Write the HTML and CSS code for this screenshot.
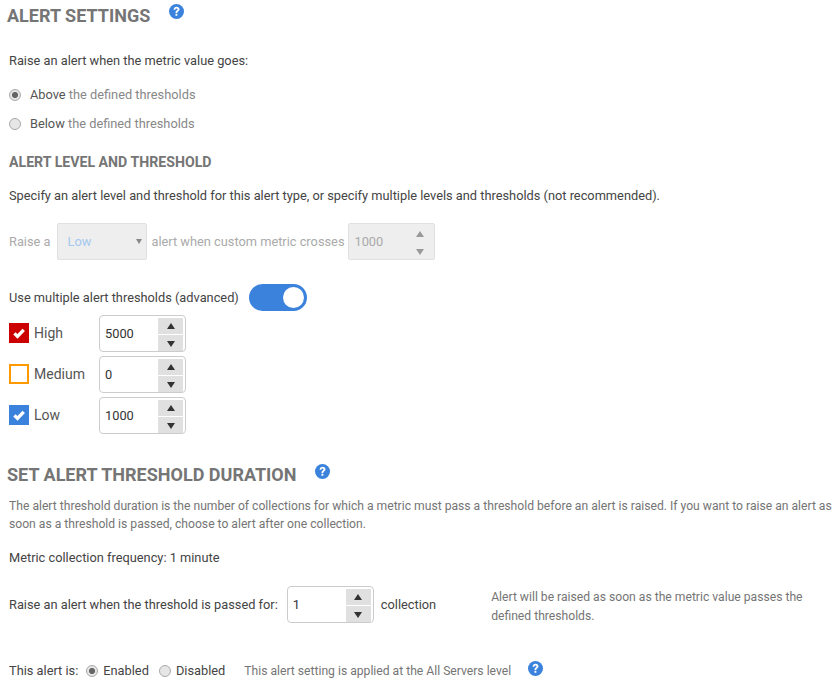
FILE: index.html
```html
<!DOCTYPE html>
<html lang="en">
<head>
    <meta charset="UTF-8">
    <title>Alert Settings</title>
    <link rel="stylesheet" href="styles.css">
</head>
<body>
    <div class="page">
        <div class="title-row title-first">
            <h2>ALERT SETTINGS</h2>
            <svg class="help help-first" viewBox="0 0 16 16"><circle cx="8" cy="8" r="8"/><path d="M4.9 6.1C5 4.2 6.3 3 8.1 3c1.8 0 3.1 1.1 3.1 2.7 0 1.2-.7 1.9-1.5 2.4-.6.4-.8.7-.8 1.5H7c0-1.3.3-2 1.1-2.6.7-.4 1-.7 1-1.2 0-.6-.4-1-1.1-1-.7 0-1.1.5-1.2 1.3zM6.9 10.4h2v2.2h-2z"/></svg>
        </div>

        <p class="line intro">Raise an alert when the metric value goes:</p>
        <label class="radio-row first-radio"><span class="radio checked"></span><span>Above <span class="muted">the defined thresholds</span></span></label>
        <label class="radio-row second-radio"><span class="radio"></span><span>Below <span class="muted">the defined thresholds</span></span></label>

        <h3>ALERT LEVEL AND THRESHOLD</h3>
        <p class="line specify">Specify an alert level and threshold for this alert type, or specify multiple levels and thresholds (not recommended).</p>

        <div class="disabled-row">
            <span>Raise a</span>
            <div class="select">Low<span class="caret"></span></div>
            <span>alert when custom metric crosses</span>
            <div class="spinner off">
                <span class="value">1000</span>
                <div class="arrows"><span class="arrow up"></span><span class="arrow down"></span></div>
            </div>
        </div>

        <div class="toggle-row">
            <span>Use multiple alert thresholds (advanced)</span>
            <span class="toggle"><span class="knob"></span></span>
        </div>

        <div class="levels">
            <div class="level">
                <span class="check high"><svg viewBox="0 0 20 20"><path d="M5.4 10.4l3.1 3 6.2-6.6"/></svg></span>
                <span class="level-name">High</span>
                <div class="spinner">
                    <span class="value">5000</span>
                    <div class="arrows"><span class="arrow up"></span><span class="arrow down"></span></div>
                </div>
            </div>
            <div class="level">
                <span class="check medium"></span>
                <span class="level-name">Medium</span>
                <div class="spinner">
                    <span class="value">0</span>
                    <div class="arrows"><span class="arrow up"></span><span class="arrow down"></span></div>
                </div>
            </div>
            <div class="level">
                <span class="check low"><svg viewBox="0 0 20 20"><path d="M5.4 10.4l3.1 3 6.2-6.6"/></svg></span>
                <span class="level-name">Low</span>
                <div class="spinner">
                    <span class="value">1000</span>
                    <div class="arrows"><span class="arrow up"></span><span class="arrow down"></span></div>
                </div>
            </div>
        </div>

        <div class="title-row title-second">
            <h2>SET ALERT THRESHOLD DURATION</h2>
            <svg class="help help-second" viewBox="0 0 16 16"><circle cx="8" cy="8" r="8"/><path d="M4.9 6.1C5 4.2 6.3 3 8.1 3c1.8 0 3.1 1.1 3.1 2.7 0 1.2-.7 1.9-1.5 2.4-.6.4-.8.7-.8 1.5H7c0-1.3.3-2 1.1-2.6.7-.4 1-.7 1-1.2 0-.6-.4-1-1.1-1-.7 0-1.1.5-1.2 1.3zM6.9 10.4h2v2.2h-2z"/></svg>
        </div>
        <p class="description">The alert threshold duration is the number of collections for which a metric must pass a threshold before an alert is raised. If you want to raise an alert as soon as a threshold is passed, choose to alert after one collection.</p>
        <p class="line frequency">Metric collection frequency: 1 minute</p>

        <div class="duration-row">
            <span>Raise an alert when the threshold is passed for:</span>
            <div class="spinner">
                <span class="value">1</span>
                <div class="arrows"><span class="arrow up"></span><span class="arrow down"></span></div>
            </div>
            <span class="unit">collection</span>
            <p class="note">Alert will be raised as soon as the metric value passes the defined thresholds.</p>
        </div>

        <div class="status-row">
            <span>This alert is:</span>
            <label class="status-option"><span class="radio small checked"></span>Enabled</label>
            <label class="status-option"><span class="radio small"></span>Disabled</label>
            <span class="scope">This alert setting is applied at the All Servers level</span>
            <svg class="help help-last" viewBox="0 0 16 16"><circle cx="8" cy="8" r="8"/><path d="M4.9 6.1C5 4.2 6.3 3 8.1 3c1.8 0 3.1 1.1 3.1 2.7 0 1.2-.7 1.9-1.5 2.4-.6.4-.8.7-.8 1.5H7c0-1.3.3-2 1.1-2.6.7-.4 1-.7 1-1.2 0-.6-.4-1-1.1-1-.7 0-1.1.5-1.2 1.3zM6.9 10.4h2v2.2h-2z"/></svg>
        </div>
    </div>
</body>
</html>
```
FILE: styles.css
```css
html, body {
    margin: 0;
    padding: 0;
    background: #fff;
}

body {
    overflow: hidden;
    color: #444;
    font-family: Roboto, "Liberation Sans", sans-serif;
    font-size: 12.8px;
    line-height: 18px;
}

.page {
    width: 838px;
    height: 681px;
    overflow: hidden;
    box-sizing: border-box;
    padding-left: 9px;
}

.title-row {
    display: flex;
    align-items: flex-start;
    margin-left: -2px;
}

.title-first {
    height: 32px;
    padding-top: 4px;
}

.title-second {
    height: 24px;
    margin-top: 29px;
}

h2 {
    margin: 0;
    color: #757575;
    font-size: 18px;
    line-height: 24px;
    font-weight: 700;
}

h3 {
    margin: 20px 0 0;
    color: #757575;
    font-size: 14.15px;
    line-height: 18px;
    font-weight: 700;
}

.help {
    width: 15px;
    height: 15px;
    flex: none;
}

.help circle {
    fill: #3a82dc;
}

.help path {
    fill: #fff;
}

.help-first {
    margin: 0 0 0 19px;
}

.help-second {
    margin: 1px 0 0 19px;
}

.help-last {
    margin: -5px 0 0 17px;
}

.line {
    margin: 0;
}

.intro {
    margin-top: 16px;
}

.muted {
    color: #888;
}

.radio-row {
    display: flex;
    align-items: center;
    gap: 9px;
    height: 18px;
    color: #555;
}

.first-radio {
    margin-top: 16px;
}

.second-radio {
    margin-top: 11px;
}

.radio {
    display: block;
    flex: none;
    box-sizing: border-box;
    width: 12px;
    height: 12px;
    margin-left: 0;
    border: 1px solid #a9a9a9;
    border-radius: 50%;
    background: #e6e6e6;
}

.radio.checked {
    background: radial-gradient(circle, #666 0 2.7px, #e6e6e6 3.4px);
}

.specify {
    margin-top: 16px;
}

.disabled-row {
    display: flex;
    align-items: center;
    margin-top: 18px;
    color: #aaa;
}

.select {
    display: flex;
    align-items: center;
    justify-content: space-between;
    box-sizing: border-box;
    width: 90px;
    height: 37px;
    margin: 0 4px 0 7px;
    padding: 0 4px 0 9px;
    border: 1px solid #e0e0e0;
    border-radius: 2px;
    background: #eee;
    color: #a5c8ef;
}

.caret {
    width: 0;
    height: 0;
    border-left: 3px solid transparent;
    border-right: 3px solid transparent;
    border-top: 5px solid #888;
}

.spinner {
    display: flex;
    align-items: stretch;
    box-sizing: border-box;
    width: 87px;
    height: 37px;
    padding: 2px 2px 0;
    border: 1px solid #ccc;
    border-radius: 4px;
    background: #fff;
    color: #333;
}

.spinner .value {
    flex: 1;
    align-self: center;
    margin-top: -2px;
    padding-left: 3px;
}

.arrows {
    display: flex;
    flex-direction: column;
    gap: 1px;
    width: 25px;
}

.arrow {
    display: flex;
    flex: 1;
    align-items: center;
    justify-content: center;
    background: #e0e0e0;
}

.arrow::before {
    content: "";
    width: 0;
    height: 0;
    border-left: 4px solid transparent;
    border-right: 4px solid transparent;
}

.arrow.up::before {
    border-bottom: 6px solid #333;
}

.arrow.down::before {
    margin-top: 2px;
    border-top: 6px solid #333;
}

.spinner.off {
    margin-left: 4px;
    border-color: #e0e0e0;
    border-radius: 2px;
    background: #eee;
    color: #aaa;
}

.spinner.off .arrow {
    background: #eee;
}

.spinner.off .arrow.up::before {
    border-bottom-color: #999;
}

.spinner.off .arrow.down::before {
    border-top-color: #999;
}

.toggle-row {
    display: flex;
    align-items: center;
    margin-top: 24px;
}

.toggle {
    display: flex;
    align-items: center;
    justify-content: flex-end;
    box-sizing: border-box;
    width: 58px;
    height: 27px;
    margin-left: 10px;
    padding-right: 3px;
    border-radius: 14px;
    background: #3a82dc;
}

.knob {
    width: 21px;
    height: 21px;
    border-radius: 50%;
    background: #fff;
}

.levels {
    display: flex;
    flex-direction: column;
    gap: 4px;
    margin-top: 4px;
}

.level {
    display: flex;
    align-items: center;
}

.level-name {
    width: 65px;
    margin: -2px 0 0 5px;
    color: #555;
    font-size: 14px;
}

.check {
    display: block;
    box-sizing: border-box;
    width: 20px;
    height: 20px;
    margin-top: -1px;
    flex: none;
}

.check svg {
    display: block;
    width: 20px;
    height: 20px;
}

.check path {
    fill: none;
    stroke: #fff;
    stroke-width: 3.4;
}

.check.high {
    background: #c00;
}

.check.medium {
    border: 2px solid #f90;
}

.check.low {
    background: #3a82dc;
}

.description {
    margin: 10px 0 0;
    color: #757575;
    font-size: 12.15px;
    line-height: 18px;
}

.frequency {
    margin-top: 16px;
}

.duration-row {
    display: flex;
    align-items: center;
    height: 37px;
    margin-top: 19px;
}

.duration-row .spinner {
    margin-left: 9px;
}

.unit {
    margin-left: 7px;
}

.note {
    width: 330px;
    margin: 5px 0 0 55px;
    color: #757575;
    font-size: 12.15px;
    line-height: 19px;
}

.status-row {
    display: flex;
    align-items: center;
    margin-top: 39px;
}

.status-option {
    display: flex;
    align-items: center;
    gap: 5px;
    margin-left: 8px;
}

.status-option + .status-option {
    margin-left: 10px;
}

.scope {
    margin-left: 19px;
    color: #757575;
    font-size: 12.15px;
}
```
